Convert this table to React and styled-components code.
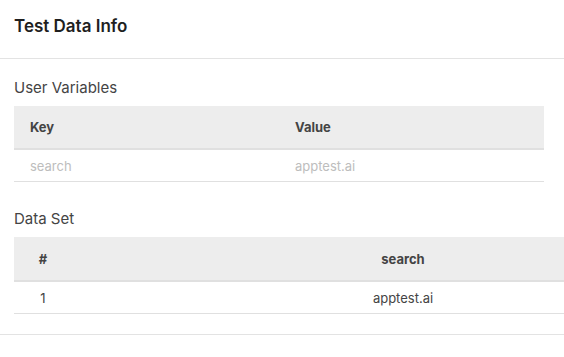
import React from 'react';
import styled, { createGlobalStyle } from 'styled-components';

const GlobalStyle = createGlobalStyle`
    body {
        margin: 0;
        background: #ffffff;
        font-family: Inter, "Noto Sans", sans-serif;
        color: #333;
    }
`;

const Panel = styled.div`
    width: 564px;
    height: 357px;
    overflow: hidden;
    background: #fff;
`;

const Header = styled.div`
    height: 58px;
    padding: 0 14px;
    display: flex;
    align-items: center;
    border-bottom: 1px solid #e3e3e3;
`;

const Title = styled.h1`
    margin: 0;
    margin-top: -6px;
    font-size: 17px;
    font-weight: 600;
    color: #1f1f1f;
`;

const Body = styled.div`
    padding: 19px 0 20px 14px;
    border-bottom: 1px solid #e3e3e3;
    display: flex;
    flex-direction: column;
`;

const SectionTitle = styled.h2`
    margin: 0 0 8px;
    height: 20px;
    line-height: 20px;
    font-size: 15px;
    font-weight: 400;
    color: #444;
`;

const Section = styled.section`
    & + & {
        margin-top: 27px;
    }
`;

const Table = styled.table`
    width: ${p => p.$width}px;
    border-collapse: collapse;
    table-layout: fixed;
    font-size: 13px;
`;

const HeadCell = styled.th`
    box-sizing: border-box;
    height: ${p => p.$height || 43}px;
    padding: 0 16px;
    background: #ededed;
    border-bottom: 2px solid #e0e0e0;
    font-weight: 700;
    color: #444;
    text-align: ${p => p.$align || 'left'};
    width: ${p => (p.$width ? `${p.$width}px` : 'auto')};
`;

const Cell = styled.td`
    height: 31px;
    padding: 0 16px;
    border-bottom: 1px solid #e0e0e0;
    color: ${p => (p.$muted ? '#bdbdbd' : '#444')};
    text-align: ${p => p.$align || 'left'};
`;

export default () => (
    <Panel>
        <GlobalStyle />
        <Header>
            <Title>Test Data Info</Title>
        </Header>

        <Body>
            <Section>
                <SectionTitle>User Variables</SectionTitle>
                <Table $width={530}>
                    <thead>
                        <tr>
                            <HeadCell>Key</HeadCell>
                            <HeadCell>Value</HeadCell>
                        </tr>
                    </thead>
                    <tbody>
                        <tr>
                            <Cell $muted>search</Cell>
                            <Cell $muted>apptest.ai</Cell>
                        </tr>
                    </tbody>
                </Table>
            </Section>

            <Section>
                <SectionTitle>Data Set</SectionTitle>
                <Table $width={720}>
                    <thead>
                        <tr>
                            <HeadCell $height={44} $width={58} $align="center">#</HeadCell>
                            <HeadCell $height={44} $align="center">search</HeadCell>
                        </tr>
                    </thead>
                    <tbody>
                        <tr>
                            <Cell $align="center">1</Cell>
                            <Cell $align="center">apptest.ai</Cell>
                        </tr>
                    </tbody>
                </Table>
            </Section>
        </Body>
    </Panel>
);
